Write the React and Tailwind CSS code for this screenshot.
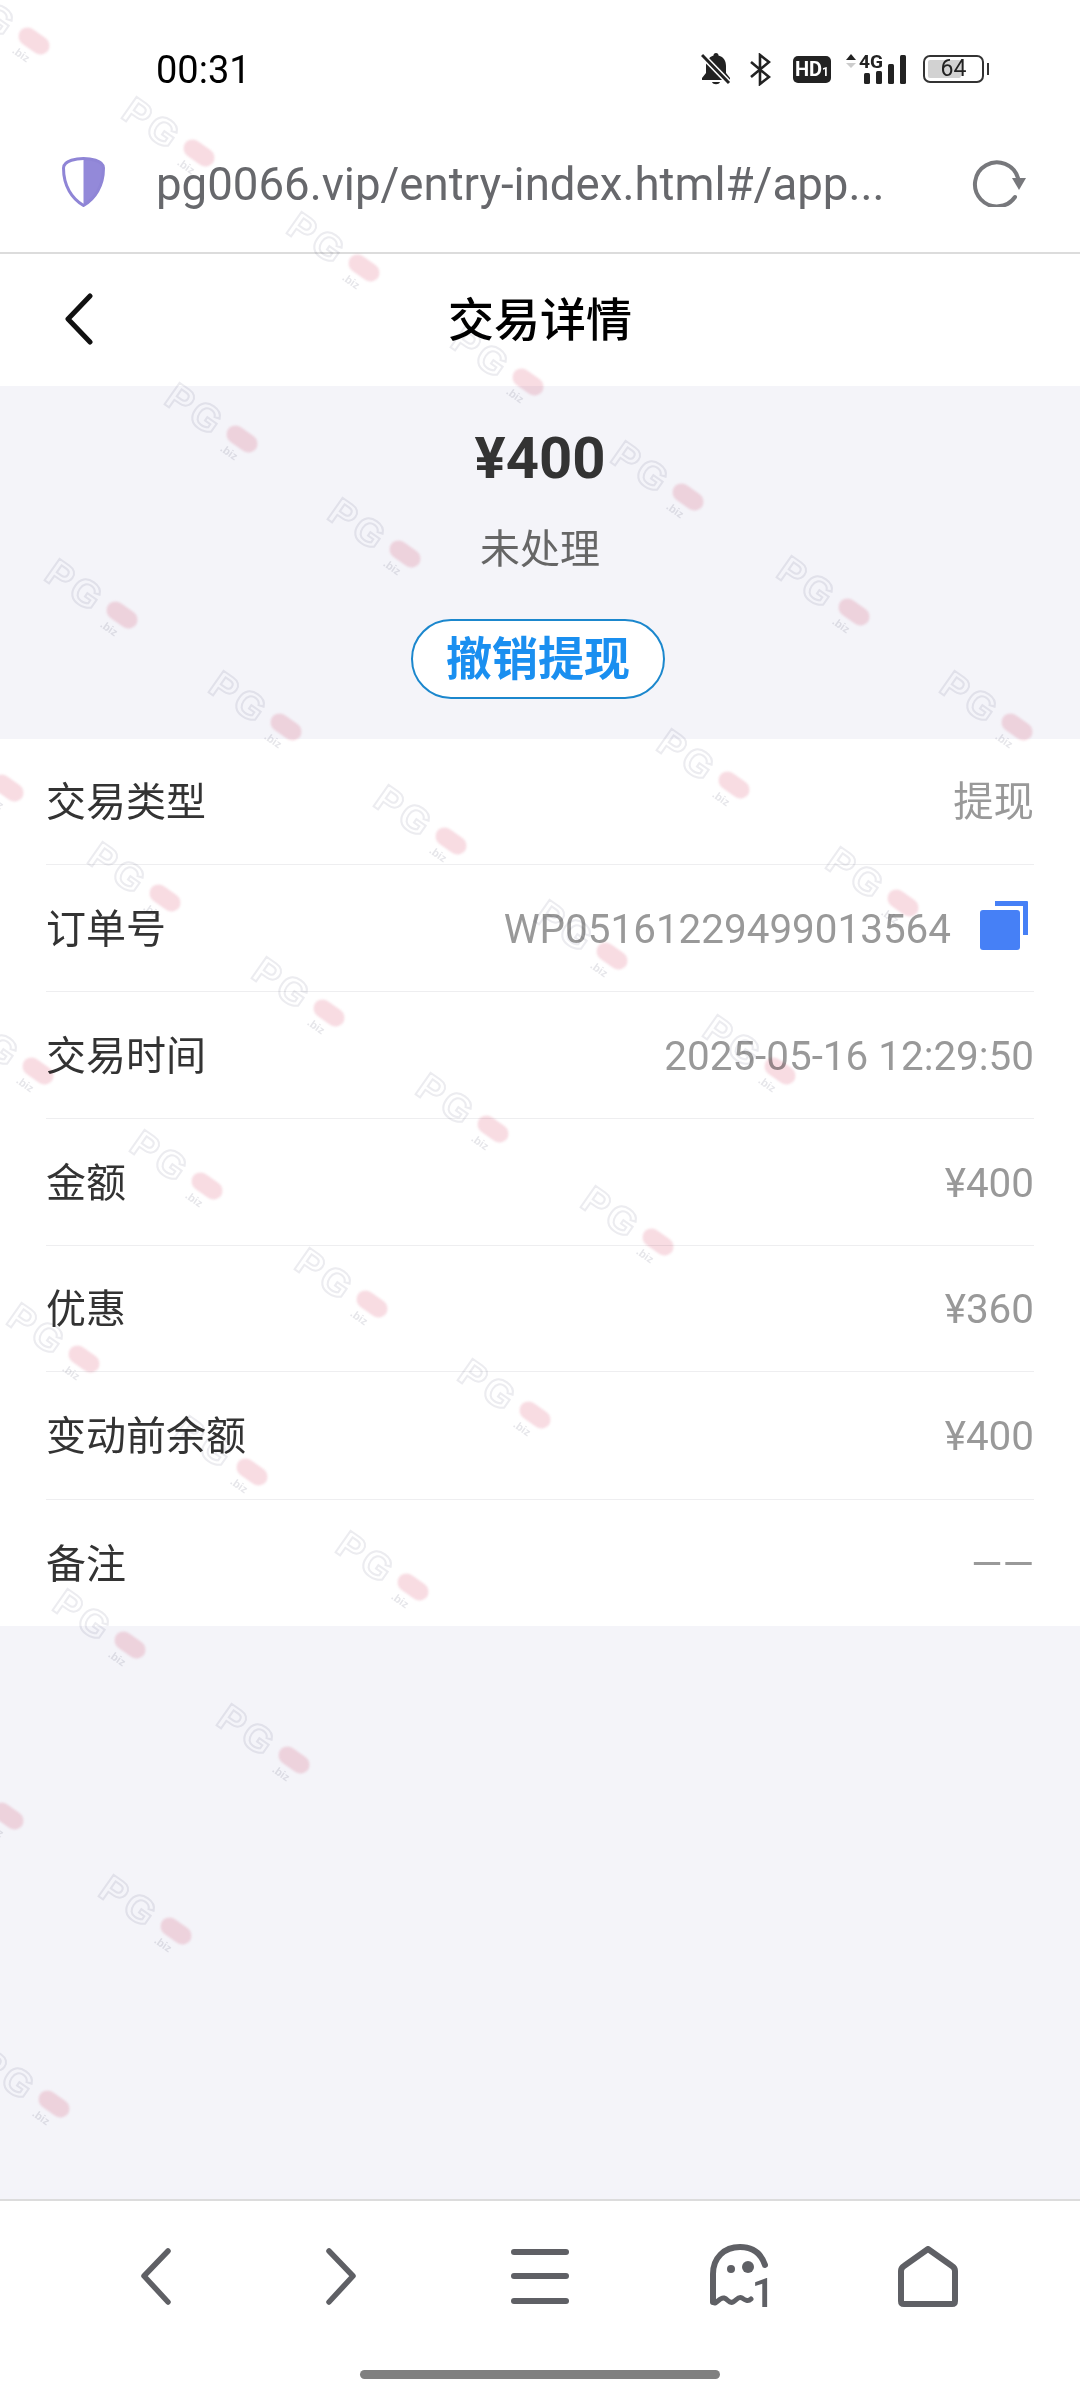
const rows = [
  { label: "交易类型", value: "提现", h: "h-[126px]" },
  { label: "订单号", value: "WP05161229499013564", copy: true, h: "h-[127px]" },
  { label: "交易时间", value: "2025-05-16 12:29:50", h: "h-[127px]" },
  { label: "金额", value: "¥400", h: "h-[127px]" },
  { label: "优惠", value: "¥360", h: "h-[126px]" },
  { label: "变动前余额", value: "¥400", h: "h-[128px]" },
  { label: "备注", value: "——", h: "h-[126px]", last: true },
];

// pink dot centres of the watermark, in page pixels
const marks = [
  [34, 41], [199, 153], [364, 268], [528, 382], [242, 439], [405, 554], [688, 497], [122, 615],
  [854, 612], [286, 727], [1017, 727], [734, 785], [451, 841], [8, 788], [903, 903], [165, 898],
  [612, 956], [329, 1013], [38, 1071], [780, 1071], [493, 1129], [207, 1186], [658, 1242], [372, 1304],
  [84, 1359], [535, 1415], [252, 1472], [413, 1587], [130, 1645], [294, 1760], [8, 1816], [176, 1931], [54, 2104],
];

function Watermark({ x, y }) {
  return (
    <div className="absolute w-0 h-0 rotate-[35deg] font-['Liberation_Sans',sans-serif]" style={{ left: x, top: y }}>
      <span className="absolute left-[-86px] top-[-17px] text-[38px] leading-[40px] font-bold tracking-[4px] text-transparent [-webkit-text-stroke:2px_#ececf0] whitespace-nowrap">
        PG
      </span>
      <span className="absolute left-[-12px] top-[12px] text-[11px] leading-[12px] font-bold text-[#e6e6ea]">.biz</span>
      <span className="absolute left-[-17px] top-[-9px] w-[34px] h-[18px] rounded-full bg-[#f2bfcb] opacity-55 blur-[1px]" />
    </div>
  );
}

function StatusBar() {
  return (
    <div className="h-[90px] pl-[156px] pr-[91px] pt-[52px] flex justify-between items-start">
      <span className="text-[38px] leading-[36px] text-black">00:31</span>
      <div className="flex items-center text-[#222]">
        <svg width="30" height="34" viewBox="0 0 30 34" fill="#222">
          <path d="M15 1 a2.5 2.5 0 0 1 2.5 2.5 C23 5 25 9 25 14 V21 L29 26 V28 H1 V26 L5 21 V14 C5 9 8 5 12.5 3.5 A2.5 2.5 0 0 1 15 1Z" />
          <path d="M11 30 H19 C18 33 12 33 11 30Z" />
          <path d="M1 3 L28 31" stroke="#fff" strokeWidth="6" />
          <path d="M1 3 L28 31" stroke="#222" strokeWidth="3" />
        </svg>
        <svg width="21" height="33" viewBox="0 0 21 33" fill="none" stroke="#222" strokeWidth="2.6" className="ml-[19px]">
          <path d="M1 9 L19 24 L10 31 V2 L19 9 L1 24" />
        </svg>
        <div className="ml-[22px] w-[38px] h-[27px] rounded-[5px] bg-[#222] text-white text-[20px] leading-[27px] font-bold text-center">
          HD<span className="text-[12px]">1</span>
        </div>
        <svg width="60" height="31" viewBox="0 0 60 31" fill="#222" className="ml-[15px]">
          <path d="M0 6 L5 0 L10 6Z" />
          <path d="M0 9 L5 14 L10 9Z" fill="#ccc" />
          <text x="13" y="14" fontSize="18" fontWeight="700" fontFamily="Roboto, sans-serif" textLength="24" lengthAdjust="spacingAndGlyphs">4G</text>
          <rect x="18" y="19" width="6" height="11" rx="1.5" />
          <rect x="30" y="17" width="6" height="13" rx="1.5" />
          <rect x="42" y="10" width="6" height="20" rx="1.5" />
          <rect x="54" y="1" width="6" height="29" rx="1.5" />
        </svg>
        <div className="ml-[17px] flex items-center gap-[3px]">
          <div className="relative w-[61px] h-[28px] rounded-[7px] border-2 border-[#333] overflow-hidden">
            <div className="absolute left-[3px] top-[3px] bottom-[3px] w-[33px] rounded-[2px] bg-[#d2d2d2]" />
            <div className="relative text-center text-[23px] leading-[24px] text-[#222]">64</div>
          </div>
          <div className="w-[2px] h-[12px] bg-[#333]" />
        </div>
      </div>
    </div>
  );
}

function UrlBar() {
  return (
    <div className="h-[164px] pt-[22px] border-b-[2px] border-[#dcdcdc] flex items-center pl-[62px] pr-[54px]">
      <svg width="43" height="50" viewBox="0 0 43 50" className="shrink-0">
        <path d="M21.5 1 C27 1 42 3 42 11 C42 29 33 42 21.5 49 Z" fill="#9389d9" />
        <path d="M21.5 1.5 C16 1.5 1.5 3 1.5 11 C1.5 29 10 42 21.5 48.5 C33 42 41.5 29 41.5 11 C41.5 3 27 1.5 21.5 1.5 Z" fill="none" stroke="#8f85d6" strokeWidth="3" />
      </svg>
      <span className="ml-[51px] mt-[6px] flex-1 text-[45.6px] leading-[60px] text-[#67686c] whitespace-nowrap">
        pg0066.vip/entry-index.html#/app...
      </span>
      <svg width="54" height="50" viewBox="0 0 54 50" fill="none" className="shrink-0">
        <path d="M43 40 A22 22 0 1 1 46 21" stroke="#77787c" strokeWidth="4" strokeLinecap="round" />
        <path d="M40 21 H54 L47 33 Z" fill="#77787c" />
      </svg>
    </div>
  );
}

function DetailRow({ row }) {
  return (
    <div className={`${row.h} pt-[3px] flex items-center justify-between ${row.last ? "" : "border-b border-[#eeeef0]"}`}>
      <span className="text-[40px] leading-[52px] text-[#333]">{row.label}</span>
      <div className="flex items-center">
        <span className="text-[40.4px] leading-[52px] text-[#999]">{row.value}</span>
        {row.copy && (
          <svg width="48" height="49" viewBox="0 0 48 49" className="ml-[29px] mr-[6px] -mt-[8px]">
            <path d="M15 0 H47 a1 1 0 0 1 1 1 V34 h-5 V5 H15Z" fill="#4680f6" />
            <rect x="0" y="9" width="40" height="40" rx="3" fill="#4680f6" />
          </svg>
        )}
      </div>
    </div>
  );
}

function BottomNav() {
  return (
    <div className="h-[201px] bg-white border-t-[2px] border-[#dcdcdc] relative">
      <div className="flex items-center h-[150px] pl-[141px]">
        <svg width="30" height="57" viewBox="0 0 30 57" fill="none" stroke="#5f6065" strokeWidth="5.5" strokeLinecap="round" strokeLinejoin="round">
          <path d="M27 3 L3 28 L27 54" />
        </svg>
        <svg width="30" height="57" viewBox="0 0 30 57" fill="none" stroke="#5f6065" strokeWidth="5.5" strokeLinecap="round" strokeLinejoin="round" className="ml-[155px]">
          <path d="M3 3 L27 28 L3 54" />
        </svg>
        <div className="ml-[155px] w-[58px] h-[55px] flex flex-col justify-between">
          <div className="h-[6px] rounded-full bg-[#5f6065]" />
          <div className="h-[6px] rounded-full bg-[#5f6065]" />
          <div className="h-[6px] rounded-full bg-[#5f6065]" />
        </div>
        <svg width="64" height="64" viewBox="0 0 64 64" fill="none" stroke="#5f6065" strokeWidth="6" strokeLinecap="round" strokeLinejoin="round" className="ml-[141px]">
          <path d="M55 21 C51 9 42 3 30 3 C14 3 3 14 3 30 V58" />
          <path d="M3 58 C6 62 9 53 14 54 C18 55 19 60 23 58 C27 56 28 52 32 54 C35 56 38 58 41 55" strokeWidth="5" />
          <circle cx="21" cy="25" r="4" fill="#5f6065" stroke="none" />
          <circle cx="38" cy="23" r="6" fill="#5f6065" stroke="none" />
          <text x="65" y="63" textAnchor="end" fontSize="41" fontWeight="500" fontFamily="Roboto, sans-serif" fill="#5f6065" stroke="none">1</text>
        </svg>
        <svg width="60" height="61" viewBox="0 0 60 61" fill="none" stroke="#5f6065" strokeWidth="6" strokeLinecap="round" strokeLinejoin="round" className="ml-[124px]">
          <path d="M30 3 L54 20 Q57 22 57 25 V55 Q57 58 54 58 H6 Q3 58 3 55 V25 Q3 22 6 20 Z" />
        </svg>
      </div>
      <div className="absolute left-[360px] bottom-[21px] w-[360px] h-[9px] rounded-full bg-[#808080]" />
    </div>
  );
}

export default function App() {
  return (
    <div className="relative w-[1080px] h-[2400px] overflow-hidden bg-[#f4f4f9] flex flex-col font-['Roboto','Noto_Sans_CJK_SC',sans-serif]">
      <div className="bg-white">
        <StatusBar />
        <UrlBar />
        <div className="relative h-[132px] flex items-center justify-center">
          <svg width="30" height="52" viewBox="0 0 30 52" fill="none" stroke="#111" strokeWidth="5" strokeLinecap="round" strokeLinejoin="round" className="absolute left-[64px] top-[39px]">
            <path d="M26 3 L4 26 L26 49" />
          </svg>
          <span className="text-[46px] font-medium text-black">交易详情</span>
        </div>
      </div>

      <div className="h-[353px] flex flex-col items-center pt-[40px]">
        <div className="text-[58px] leading-[64px] font-bold text-[#333]">¥400</div>
        <div className="mt-[36px] text-[40px] leading-[48px] text-[#666]">未处理</div>
        <div className="mt-[45px] -ml-[4px] w-[254px] h-[80px] rounded-full border-2 border-[#1b87cd] bg-white flex items-center justify-center text-[46px] font-bold text-[#1a8ff0]">
          撤销提现
        </div>
      </div>

      <div className="bg-white px-[46px] h-[887px]">
        {rows.map(row => (
          <DetailRow key={row.label} row={row} />
        ))}
      </div>

      <div className="flex-1" />
      <BottomNav />

      {/* WATERMARK */}
      <div className="absolute inset-0 pointer-events-none mix-blend-multiply">
        {marks.map(([x, y]) => (
          <Watermark key={`${x}-${y}`} x={x} y={y} />
        ))}
      </div>
    </div>
  );
}
